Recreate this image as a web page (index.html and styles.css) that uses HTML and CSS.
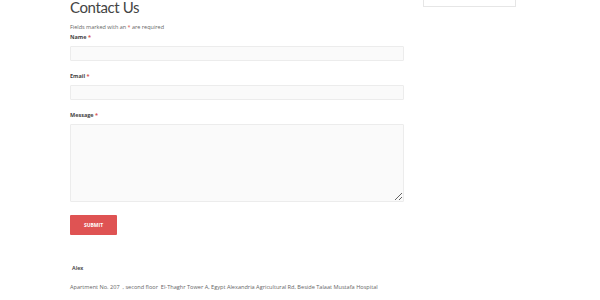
FILE: index.html
```html
<!DOCTYPE html>
<html lang="en">
<head>
    <meta charset="UTF-8">
    <meta name="viewport" content="width=device-width, initial-scale=1.0">
    <title>Contact Us</title>
    <link rel="stylesheet" href="styles.css">
</head>
<body>
    <div class="page">
        <div class="main">
            <h1 class="title">Contact Us</h1>
            <p class="note">Fields marked with an <span class="req">*</span> are required</p>
            <form class="form">
                <label class="label">Name <span class="req">*</span></label>
                <input type="text" class="field">
                <label class="label">Email <span class="req">*</span></label>
                <input type="text" class="field">
                <label class="label">Message <span class="req">*</span></label>
                <textarea class="field area"></textarea>
                <button type="button" class="submit">SUBMIT</button>
            </form>
            <div class="city">Alex</div>
            <div class="address">Apartment No. 207 &nbsp;, second floor &nbsp;El-Thaghr Tower A, Egypt Alexandria Agricultural Rd, Beside Talaat Mustafa Hospital</div>
        </div>
        <div class="side">
            <div class="side-box"></div>
        </div>
    </div>
</body>
</html>
```

FILE: styles.css
```css
body {
  margin: 0;
  background: #fff;
  font-family: "Open Sans", "Liberation Sans", sans-serif;
  color: #555;
}
.page {
  display: flex;
  padding-left: 70px;
}
.main {
  width: 334px;
}
.side {
  margin-left: 19px;
  width: 93px;
}
.side-box {
  height: 6px;
  border: 1px solid #e6e6e6;
  border-top: none;
  background: #fff;
}
.title {
  margin: -2px 0 0 0;
  font-family: "Lato", "Open Sans", sans-serif;
  font-weight: 400;
  font-size: 15px;
  letter-spacing: -0.4px;
  line-height: 18px;
  color: #444;
}
.note {
  margin: 7px 0 0 0;
  font-size: 5.5px;
  line-height: 8px;
  color: #666;
}
.req {
  color: #d9534f;
}
.form {
  display: flex;
  flex-direction: column;
  align-items: flex-start;
}
.label {
  margin-top: 2px;
  font-size: 5.5px;
  font-weight: 700;
  line-height: 8px;
  color: #444;
}
.field {
  box-sizing: border-box;
  width: 334px;
  height: 15px;
  margin: 5px 0 9px 0;
  background: #fafafa;
  border: 1px solid #ececec;
  border-radius: 1px;
}
.area {
  height: 78px;
  resize: vertical;
  margin-bottom: 13px;
}
.submit {
  width: 47px;
  height: 20px;
  padding: 0;
  background: #df5353;
  color: #fff;
  border: none;
  border-radius: 1px;
  font-family: "Open Sans", sans-serif;
  font-size: 5px;
  font-weight: 700;
}
.city {
  margin: 29px 0 0 2px;
  font-size: 5.5px;
  font-weight: 600;
  line-height: 8px;
  color: #333;
}
.address {
  margin-top: 11px;
  font-size: 5.6px;
  line-height: 8px;
  color: #666;
  white-space: nowrap;
}
```
